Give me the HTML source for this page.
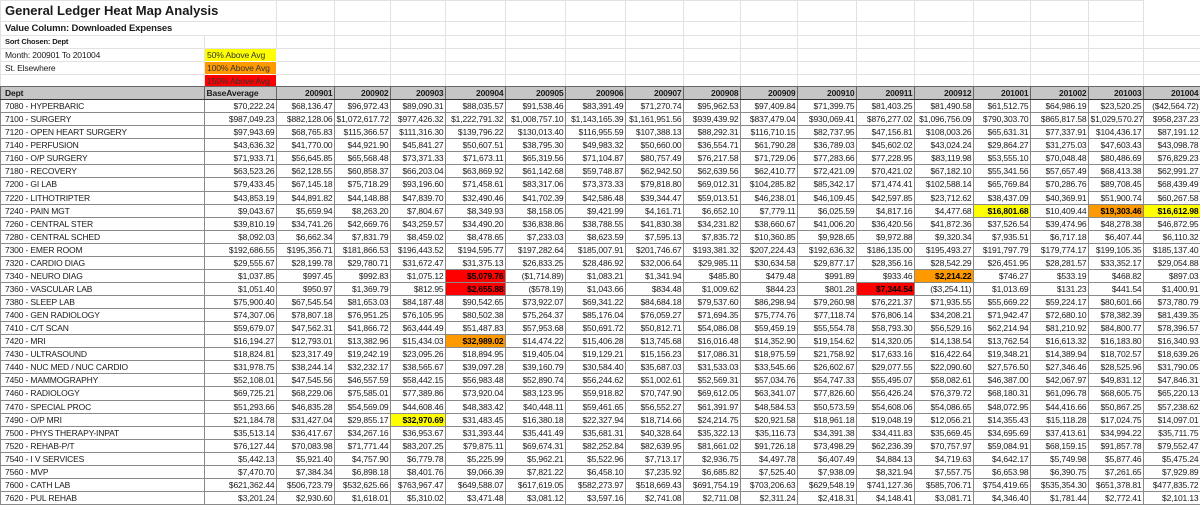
<!DOCTYPE html>
<html><head><meta charset="utf-8"><style>
*{margin:0;padding:0;box-sizing:border-box}
body{width:1200px;height:494px;overflow:hidden;background:#fff;font-family:"Liberation Sans",Arial,sans-serif;color:#1a1a1a}
table{border-collapse:collapse;table-layout:fixed;width:1200px;position:absolute;left:0}
td{overflow:hidden;white-space:nowrap;font-size:8.5px;letter-spacing:-0.15px;padding:0 1.5px;line-height:12px}
#top{top:0}
#top td{border:1px solid #e2e2e2}
#top .t1{height:20px;font-size:13px;font-weight:bold;letter-spacing:0;line-height:20px;padding-left:4px}
#top .t2{height:14px;font-size:9.5px;font-weight:bold;padding-left:4px}
#top td{height:13px;padding-left:4px}
.y{background:#ffff00}.o{background:#ff9900}.r{background:#ff0000}
#top td.y,#top td.o,#top td.r{border-color:transparent;font-size:8.6px;color:#333;padding-left:2px}
#d{top:86px}
#d td{height:13.07px;border:1px solid #8a8a8a;text-align:right}
#d td:first-child{text-align:left;padding-left:4px}
#d tr.h td{background:#c6c6c6;font-weight:bold;border:1px solid #666;border-bottom:1.5px solid #333}
#d tr.h td:nth-child(2){text-align:left}
#d td.y,#d td.o,#d td.r{font-weight:bold;color:#000}
</style></head><body>
<table id="top"><colgroup><col style="width:204px"><col style="width:72px"><col style="width:58px"><col style="width:56px"><col style="width:55px"><col style="width:60px"><col style="width:60px"><col style="width:60px"><col style="width:58px"><col style="width:57px"><col style="width:57px"><col style="width:59px"><col style="width:58px"><col style="width:59px"><col style="width:57px"><col style="width:58px"><col style="width:55px"><col style="width:57px"></colgroup>
<tr><td class="t1" colspan="2">General Ledger Heat Map Analysis</td><td></td><td></td><td></td><td></td><td></td><td></td><td></td><td></td><td></td><td></td><td></td><td></td><td></td><td></td><td></td></tr>
<tr><td class="t2" colspan="2">Value Column: Downloaded Expenses</td><td></td><td></td><td></td><td></td><td></td><td></td><td></td><td></td><td></td><td></td><td></td><td></td><td></td><td></td><td></td></tr>
<tr><td style="font-size:7.5px;font-weight:bold">Sort Chosen: Dept</td><td></td><td></td><td></td><td></td><td></td><td></td><td></td><td></td><td></td><td></td><td></td><td></td><td></td><td></td><td></td><td></td><td></td></tr>
<tr><td>Month: 200901 To 201004</td><td class="y">50% Above Avg</td><td></td><td></td><td></td><td></td><td></td><td></td><td></td><td></td><td></td><td></td><td></td><td></td><td></td><td></td><td></td><td></td></tr>
<tr><td>St. Elsewhere</td><td class="o">100% Above Avg</td><td></td><td></td><td></td><td></td><td></td><td></td><td></td><td></td><td></td><td></td><td></td><td></td><td></td><td></td><td></td><td></td></tr>
<tr><td></td><td class="r">150% Above Avg</td><td></td><td></td><td></td><td></td><td></td><td></td><td></td><td></td><td></td><td></td><td></td><td></td><td></td><td></td><td></td><td></td></tr>
</table>
<table id="d"><colgroup><col style="width:204px"><col style="width:72px"><col style="width:58px"><col style="width:56px"><col style="width:55px"><col style="width:60px"><col style="width:60px"><col style="width:60px"><col style="width:58px"><col style="width:57px"><col style="width:57px"><col style="width:59px"><col style="width:58px"><col style="width:59px"><col style="width:57px"><col style="width:58px"><col style="width:55px"><col style="width:57px"></colgroup>
<tr class="h"><td>Dept</td><td>BaseAverage</td><td>200901</td><td>200902</td><td>200903</td><td>200904</td><td>200905</td><td>200906</td><td>200907</td><td>200908</td><td>200909</td><td>200910</td><td>200911</td><td>200912</td><td>201001</td><td>201002</td><td>201003</td><td>201004</td></tr>
<tr><td>7080 - HYPERBARIC</td><td>$70,222.24</td><td>$68,136.47</td><td>$96,972.43</td><td>$89,090.31</td><td>$88,035.57</td><td>$91,538.46</td><td>$83,391.49</td><td>$71,270.74</td><td>$95,962.53</td><td>$97,409.84</td><td>$71,399.75</td><td>$81,403.25</td><td>$81,490.58</td><td>$61,512.75</td><td>$64,986.19</td><td>$23,520.25</td><td>($42,564.72)</td></tr>
<tr><td>7100 - SURGERY</td><td>$987,049.23</td><td>$882,128.06</td><td>$1,072,617.72</td><td>$977,426.32</td><td>$1,222,791.32</td><td>$1,008,757.10</td><td>$1,143,165.39</td><td>$1,161,951.56</td><td>$939,439.92</td><td>$837,479.04</td><td>$930,069.41</td><td>$876,277.02</td><td>$1,096,756.09</td><td>$790,303.70</td><td>$865,817.58</td><td>$1,029,570.27</td><td>$958,237.23</td></tr>
<tr><td>7120 - OPEN HEART SURGERY</td><td>$97,943.69</td><td>$68,765.83</td><td>$115,366.57</td><td>$111,316.30</td><td>$139,796.22</td><td>$130,013.40</td><td>$116,955.59</td><td>$107,388.13</td><td>$88,292.31</td><td>$116,710.15</td><td>$82,737.95</td><td>$47,156.81</td><td>$108,003.26</td><td>$65,631.31</td><td>$77,337.91</td><td>$104,436.17</td><td>$87,191.12</td></tr>
<tr><td>7140 - PERFUSION</td><td>$43,636.32</td><td>$41,770.00</td><td>$44,921.90</td><td>$45,841.27</td><td>$50,607.51</td><td>$38,795.30</td><td>$49,983.32</td><td>$50,660.00</td><td>$36,554.71</td><td>$61,790.28</td><td>$36,789.03</td><td>$45,602.02</td><td>$43,024.24</td><td>$29,864.27</td><td>$31,275.03</td><td>$47,603.43</td><td>$43,098.78</td></tr>
<tr><td>7160 - O/P SURGERY</td><td>$71,933.71</td><td>$56,645.85</td><td>$65,568.48</td><td>$73,371.33</td><td>$71,673.11</td><td>$65,319.56</td><td>$71,104.87</td><td>$80,757.49</td><td>$76,217.58</td><td>$71,729.06</td><td>$77,283.66</td><td>$77,228.95</td><td>$83,119.98</td><td>$53,555.10</td><td>$70,048.48</td><td>$80,486.69</td><td>$76,829.23</td></tr>
<tr><td>7180 - RECOVERY</td><td>$63,523.26</td><td>$62,128.55</td><td>$60,858.37</td><td>$66,203.04</td><td>$63,869.92</td><td>$61,142.68</td><td>$59,748.87</td><td>$62,942.50</td><td>$62,639.56</td><td>$62,410.77</td><td>$72,421.09</td><td>$70,421.02</td><td>$67,182.10</td><td>$55,341.56</td><td>$57,657.49</td><td>$68,413.38</td><td>$62,991.27</td></tr>
<tr><td>7200 - GI LAB</td><td>$79,433.45</td><td>$67,145.18</td><td>$75,718.29</td><td>$93,196.60</td><td>$71,458.61</td><td>$83,317.06</td><td>$73,373.33</td><td>$79,818.80</td><td>$69,012.31</td><td>$104,285.82</td><td>$85,342.17</td><td>$71,474.41</td><td>$102,588.14</td><td>$65,769.84</td><td>$70,286.76</td><td>$89,708.45</td><td>$68,439.49</td></tr>
<tr><td>7220 - LITHOTRIPTER</td><td>$43,853.19</td><td>$44,891.82</td><td>$44,148.88</td><td>$47,839.70</td><td>$32,490.46</td><td>$41,702.39</td><td>$42,586.48</td><td>$39,344.47</td><td>$59,013.51</td><td>$46,238.01</td><td>$46,109.45</td><td>$42,597.85</td><td>$23,712.62</td><td>$38,437.09</td><td>$40,369.91</td><td>$51,900.74</td><td>$60,267.58</td></tr>
<tr><td>7240 - PAIN MGT</td><td>$9,043.67</td><td>$5,659.94</td><td>$8,263.20</td><td>$7,804.67</td><td>$8,349.93</td><td>$8,158.05</td><td>$9,421.99</td><td>$4,161.71</td><td>$6,652.10</td><td>$7,779.11</td><td>$6,025.59</td><td>$4,817.16</td><td>$4,477.68</td><td class="y">$16,801.68</td><td>$10,409.44</td><td class="o">$19,303.46</td><td class="y">$16,612.98</td></tr>
<tr><td>7260 - CENTRAL STER</td><td>$39,810.19</td><td>$34,741.26</td><td>$42,669.76</td><td>$43,259.57</td><td>$34,490.20</td><td>$36,838.86</td><td>$38,788.55</td><td>$41,830.38</td><td>$34,231.82</td><td>$38,660.67</td><td>$41,006.20</td><td>$36,420.56</td><td>$41,872.36</td><td>$37,526.54</td><td>$39,474.96</td><td>$48,278.38</td><td>$46,872.95</td></tr>
<tr><td>7280 - CENTRAL SCHED</td><td>$8,092.03</td><td>$6,662.34</td><td>$7,831.79</td><td>$8,459.02</td><td>$8,478.65</td><td>$7,233.03</td><td>$8,623.59</td><td>$7,595.13</td><td>$7,835.72</td><td>$10,360.85</td><td>$9,928.65</td><td>$9,972.88</td><td>$9,320.34</td><td>$7,935.51</td><td>$6,717.18</td><td>$6,407.44</td><td>$6,110.32</td></tr>
<tr><td>7300 - EMER ROOM</td><td>$192,686.55</td><td>$195,356.71</td><td>$181,866.53</td><td>$196,443.52</td><td>$194,595.77</td><td>$197,282.64</td><td>$185,007.91</td><td>$201,746.67</td><td>$193,381.32</td><td>$207,224.43</td><td>$192,636.32</td><td>$186,135.00</td><td>$195,493.27</td><td>$191,797.79</td><td>$179,774.17</td><td>$199,105.35</td><td>$185,137.40</td></tr>
<tr><td>7320 - CARDIO DIAG</td><td>$29,555.67</td><td>$28,199.78</td><td>$29,780.71</td><td>$31,672.47</td><td>$31,375.13</td><td>$26,833.25</td><td>$28,486.92</td><td>$32,006.64</td><td>$29,985.11</td><td>$30,634.58</td><td>$29,877.17</td><td>$28,356.16</td><td>$28,542.29</td><td>$26,451.95</td><td>$28,281.57</td><td>$33,352.17</td><td>$29,054.88</td></tr>
<tr><td>7340 - NEURO DIAG</td><td>$1,037.85</td><td>$997.45</td><td>$992.83</td><td>$1,075.12</td><td class="r">$5,079.76</td><td>($1,714.89)</td><td>$1,083.21</td><td>$1,341.94</td><td>$485.80</td><td>$479.48</td><td>$991.89</td><td>$933.46</td><td class="o">$2,214.22</td><td>$746.27</td><td>$533.19</td><td>$468.82</td><td>$897.03</td></tr>
<tr><td>7360 - VASCULAR LAB</td><td>$1,051.40</td><td>$950.97</td><td>$1,369.79</td><td>$812.95</td><td class="r">$2,655.88</td><td>($578.19)</td><td>$1,043.66</td><td>$834.48</td><td>$1,009.62</td><td>$844.23</td><td>$801.28</td><td class="r">$7,344.54</td><td>($3,254.11)</td><td>$1,013.69</td><td>$131.23</td><td>$441.54</td><td>$1,400.91</td></tr>
<tr><td>7380 - SLEEP LAB</td><td>$75,900.40</td><td>$67,545.54</td><td>$81,653.03</td><td>$84,187.48</td><td>$90,542.65</td><td>$73,922.07</td><td>$69,341.22</td><td>$84,684.18</td><td>$79,537.60</td><td>$86,298.94</td><td>$79,260.98</td><td>$76,221.37</td><td>$71,935.55</td><td>$55,669.22</td><td>$59,224.17</td><td>$80,601.66</td><td>$73,780.79</td></tr>
<tr><td>7400 - GEN RADIOLOGY</td><td>$74,307.06</td><td>$78,807.18</td><td>$76,951.25</td><td>$76,105.95</td><td>$80,502.38</td><td>$75,264.37</td><td>$85,176.04</td><td>$76,059.27</td><td>$71,694.35</td><td>$75,774.76</td><td>$77,118.74</td><td>$76,806.14</td><td>$34,208.21</td><td>$71,942.47</td><td>$72,680.10</td><td>$78,382.39</td><td>$81,439.35</td></tr>
<tr><td>7410 - C/T SCAN</td><td>$59,679.07</td><td>$47,562.31</td><td>$41,866.72</td><td>$63,444.49</td><td>$51,487.83</td><td>$57,953.68</td><td>$50,691.72</td><td>$50,812.71</td><td>$54,086.08</td><td>$59,459.19</td><td>$55,554.78</td><td>$58,793.30</td><td>$56,529.16</td><td>$62,214.94</td><td>$81,210.92</td><td>$84,800.77</td><td>$78,396.57</td></tr>
<tr><td>7420 - MRI</td><td>$16,194.27</td><td>$12,793.01</td><td>$13,382.96</td><td>$15,434.03</td><td class="o">$32,989.02</td><td>$14,474.22</td><td>$15,406.28</td><td>$13,745.68</td><td>$16,016.48</td><td>$14,352.90</td><td>$19,154.62</td><td>$14,320.05</td><td>$14,138.54</td><td>$13,762.54</td><td>$16,613.32</td><td>$16,183.80</td><td>$16,340.93</td></tr>
<tr><td>7430 - ULTRASOUND</td><td>$18,824.81</td><td>$23,317.49</td><td>$19,242.19</td><td>$23,095.26</td><td>$18,894.95</td><td>$19,405.04</td><td>$19,129.21</td><td>$15,156.23</td><td>$17,086.31</td><td>$18,975.59</td><td>$21,758.92</td><td>$17,633.16</td><td>$16,422.64</td><td>$19,348.21</td><td>$14,389.94</td><td>$18,702.57</td><td>$18,639.26</td></tr>
<tr><td>7440 - NUC MED / NUC CARDIO</td><td>$31,978.75</td><td>$38,244.14</td><td>$32,232.17</td><td>$38,565.67</td><td>$39,097.28</td><td>$39,160.79</td><td>$30,584.40</td><td>$35,687.03</td><td>$31,533.03</td><td>$33,545.66</td><td>$26,602.67</td><td>$29,077.55</td><td>$22,090.60</td><td>$27,576.50</td><td>$27,346.46</td><td>$28,525.96</td><td>$31,790.05</td></tr>
<tr><td>7450 - MAMMOGRAPHY</td><td>$52,108.01</td><td>$47,545.56</td><td>$46,557.59</td><td>$58,442.15</td><td>$56,983.48</td><td>$52,890.74</td><td>$56,244.62</td><td>$51,002.61</td><td>$52,569.31</td><td>$57,034.76</td><td>$54,747.33</td><td>$55,495.07</td><td>$58,082.61</td><td>$46,387.00</td><td>$42,067.97</td><td>$49,831.12</td><td>$47,846.31</td></tr>
<tr><td>7460 - RADIOLOGY</td><td>$69,725.21</td><td>$68,229.06</td><td>$75,585.01</td><td>$77,389.86</td><td>$73,920.04</td><td>$83,123.95</td><td>$59,918.82</td><td>$70,747.90</td><td>$69,612.05</td><td>$63,341.07</td><td>$77,826.60</td><td>$56,426.24</td><td>$76,379.72</td><td>$68,180.31</td><td>$61,096.78</td><td>$68,605.75</td><td>$65,220.13</td></tr>
<tr><td>7470 - SPECIAL PROC</td><td>$51,293.66</td><td>$46,835.28</td><td>$54,569.09</td><td>$44,608.46</td><td>$48,383.42</td><td>$40,448.11</td><td>$59,461.65</td><td>$56,552.27</td><td>$61,391.97</td><td>$48,584.53</td><td>$50,573.59</td><td>$54,608.06</td><td>$54,086.65</td><td>$48,072.95</td><td>$44,416.66</td><td>$50,867.25</td><td>$57,238.62</td></tr>
<tr><td>7490 - O/P MRI</td><td>$21,184.78</td><td>$31,427.04</td><td>$29,855.17</td><td class="y">$32,970.69</td><td>$31,483.45</td><td>$16,380.18</td><td>$22,327.94</td><td>$18,714.66</td><td>$24,214.75</td><td>$20,921.58</td><td>$18,961.18</td><td>$19,048.19</td><td>$12,056.21</td><td>$14,355.43</td><td>$15,118.28</td><td>$17,024.75</td><td>$14,097.01</td></tr>
<tr><td>7500 - PHYS THERAPY-INPAT</td><td>$35,513.14</td><td>$36,417.67</td><td>$34,267.16</td><td>$36,953.67</td><td>$31,393.44</td><td>$35,441.49</td><td>$35,681.31</td><td>$40,328.64</td><td>$35,322.13</td><td>$35,116.73</td><td>$34,391.38</td><td>$34,411.83</td><td>$35,669.45</td><td>$34,695.69</td><td>$37,413.61</td><td>$34,994.22</td><td>$35,711.75</td></tr>
<tr><td>7520 - REHAB-P/T</td><td>$76,127.44</td><td>$70,083.98</td><td>$71,771.44</td><td>$83,207.25</td><td>$79,875.11</td><td>$69,674.31</td><td>$82,252.84</td><td>$82,639.95</td><td>$81,661.02</td><td>$91,726.18</td><td>$73,498.29</td><td>$62,236.39</td><td>$70,757.97</td><td>$59,084.91</td><td>$68,159.15</td><td>$91,857.78</td><td>$79,552.47</td></tr>
<tr><td>7540 - I V SERVICES</td><td>$5,442.13</td><td>$5,921.40</td><td>$4,757.90</td><td>$6,779.78</td><td>$5,225.99</td><td>$5,962.21</td><td>$5,522.96</td><td>$7,713.17</td><td>$2,936.75</td><td>$4,497.78</td><td>$6,407.49</td><td>$4,884.13</td><td>$4,719.63</td><td>$4,642.17</td><td>$5,749.98</td><td>$5,877.46</td><td>$5,475.24</td></tr>
<tr><td>7560 - MVP</td><td>$7,470.70</td><td>$7,384.34</td><td>$6,898.18</td><td>$8,401.76</td><td>$9,066.39</td><td>$7,821.22</td><td>$6,458.10</td><td>$7,235.92</td><td>$6,685.82</td><td>$7,525.40</td><td>$7,938.09</td><td>$8,321.94</td><td>$7,557.75</td><td>$6,653.98</td><td>$6,390.75</td><td>$7,261.65</td><td>$7,929.89</td></tr>
<tr><td>7600 - CATH LAB</td><td>$621,362.44</td><td>$506,723.79</td><td>$532,625.66</td><td>$763,967.47</td><td>$649,588.07</td><td>$617,619.05</td><td>$582,273.97</td><td>$518,669.43</td><td>$691,754.19</td><td>$703,206.63</td><td>$629,548.19</td><td>$741,127.36</td><td>$585,706.71</td><td>$754,419.65</td><td>$535,354.30</td><td>$651,378.81</td><td>$477,835.72</td></tr>
<tr><td>7620 - PUL REHAB</td><td>$3,201.24</td><td>$2,930.60</td><td>$1,618.01</td><td>$5,310.02</td><td>$3,471.48</td><td>$3,081.12</td><td>$3,597.16</td><td>$2,741.08</td><td>$2,711.08</td><td>$2,311.24</td><td>$2,418.31</td><td>$4,148.41</td><td>$3,081.71</td><td>$4,346.40</td><td>$1,781.44</td><td>$2,772.41</td><td>$2,101.13</td></tr>
</table>
</body></html>
